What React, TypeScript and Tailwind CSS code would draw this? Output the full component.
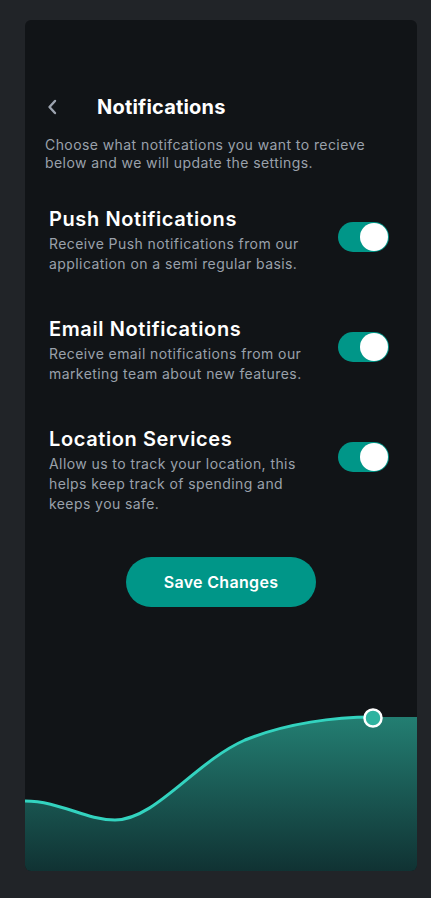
const settings = [
  {
    title: "Push Notifications",
    description: "Receive Push notifications from our application on a semi regular basis.",
  },
  {
    title: "Email Notifications",
    description: "Receive email notifications from our marketing team about new features.",
  },
  {
    title: "Location Services",
    description: "Allow us to track your location, this helps keep track of spending and keeps you safe.",
  },
];

function Toggle() {
  return (
    <div className="w-[51px] h-[30px] rounded-full bg-[#009688] p-[1px] flex justify-end items-center flex-shrink-0">
      <div className="w-[28px] h-[28px] rounded-full bg-white" />
    </div>
  );
}

function Chart() {
  return (
    <svg width="392" height="171" viewBox="0 0 392 171" className="block">
      <defs>
        <linearGradient id="fillGrad" x1="0" y1="0" x2="0" y2="1">
          <stop offset="0%" stopColor="#237e72" />
          <stop offset="100%" stopColor="#103233" />
        </linearGradient>
      </defs>
      <path
        d="M0,101 C35,101 60,120 90,120 C130,120 170,62 220,40 C262,23 310,17 348,17 L392,17 L392,171 L0,171 Z"
        fill="url(#fillGrad)"
      />
      <path
        d="M0,101 C35,101 60,120 90,120 C130,120 170,62 220,40 C262,23 310,17 348,17"
        fill="none"
        stroke="#33d3bf"
        strokeWidth="3"
      />
      <circle cx="348" cy="18" r="8.5" fill="#2fb3a0" stroke="#ffffff" strokeWidth="2.5" />
    </svg>
  );
}

export default function App() {
  return (
    <div className="min-h-screen bg-[#212428] pt-[20px] pl-[25px]" style={{ fontFamily: "Inter, 'Noto Sans', sans-serif" }}>
      <div className="w-[392px] h-[851px] bg-[#111417] rounded-md overflow-hidden flex flex-col">
        <div className="flex-1 pt-[73px]">
          <div className="px-5">
            <div className="flex items-center h-7">
              <svg width="12" height="16" viewBox="0 0 12 16" className="ml-[1px]">
                <polyline points="9,2 3.5,8 9,14" fill="none" stroke="#9ca3af" strokeWidth="2.4" strokeLinecap="round" strokeLinejoin="round" />
              </svg>
              <h1 className="ml-[39px] text-[20px] font-bold text-white tracking-[0.01em]">Notifications</h1>
            </div>
            <p className="mt-[15px] w-[335px] text-[14px] leading-[18px] text-[#9aa1ab] tracking-[0.03em]">
              Choose what notifcations you want to recieve below and we will update the settings.
            </p>
          </div>

          <div className="pl-6 pr-7 mt-[34px] flex flex-col gap-[42px]">
            {settings.map((item, idx) => (
              <div key={idx} className="flex items-start justify-between">
                <div className="w-[265px]">
                  <h2 className="text-[20px] leading-[26px] font-semibold text-white tracking-[0.03em]">{item.title}</h2>
                  <p className="mt-[2px] text-[14px] leading-[20px] text-[#9aa1ab] tracking-[0.03em]">{item.description}</p>
                </div>
                <div className="mt-[16px]">
                  <Toggle />
                </div>
              </div>
            ))}
          </div>

          <div className="flex justify-center mt-[43px]">
            <button className="w-[190px] h-[50px] rounded-full bg-[#009688] text-white text-[16px] font-semibold tracking-[0.02em]">
              Save Changes
            </button>
          </div>
        </div>
        <Chart />
      </div>
    </div>
  );
}
